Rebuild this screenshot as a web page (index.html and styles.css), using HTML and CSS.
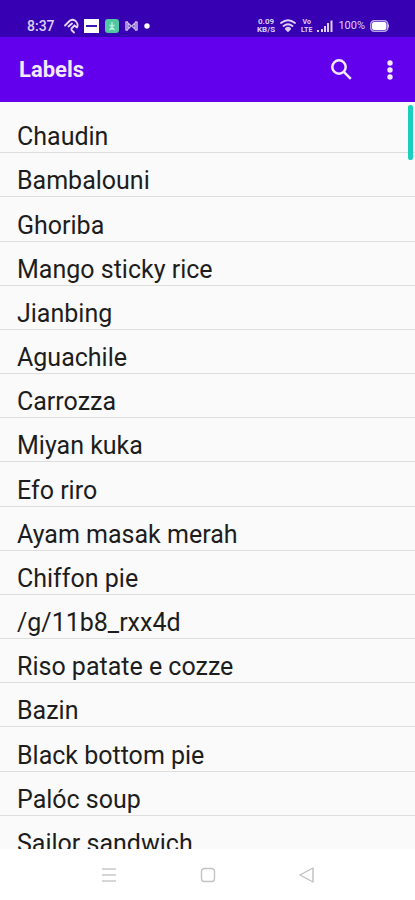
FILE: index.html
```html
<!DOCTYPE html>
<html lang="en">
<head>
<meta charset="utf-8">
<meta name="viewport" content="width=device-width, initial-scale=1">
<title>Labels</title>
<link rel="stylesheet" href="styles.css">
</head>
<body>
<div class="status">
  <div class="status-group">
    <span class="clock">8:37</span>
    <svg width="15" height="16" viewBox="0 0 15 16" fill="none" stroke="#e4d9fa" stroke-width="1.800" stroke-linecap="round" stroke-linejoin="round"><path d="M1 7.500 6 2.500Q10 .5 12.500 4Q14.500 7 13 9.500L10.500 7.500M4.500 8.500 8 5.500M10.500 7.500 7.500 10.500M7.500 12 10 14.500"/></svg>
    <svg width="15" height="16" viewBox="0 0 15 16"><path fill="#fff" d="M0 1h15v14H0z"/><path fill="#3d16b5" d="M2 7h11v2H2z"/></svg>
    <svg class="wide-gap" width="14" height="16" viewBox="0 0 14 16"><rect y="1" width="14" height="14" rx="3" fill="#50c9a3"/><path d="M7 4v8M4.500 7.500h5M7 9l-2.500 3M7 9l2.500 3" fill="none" stroke="#b9f0dc" stroke-width="1.300"/></svg>
    <svg class="wide-gap" width="13" height="16" viewBox="0 0 13 16" fill="none" stroke="#c9b8f0" stroke-width="1.500" stroke-linejoin="round"><path d="M3 4H1v8h2M10 4h2v8h-2M3 5l3 3-3 3zM10 5 7 8l3 3z"/></svg>
    <svg class="wide-gap" width="6" height="16" viewBox="0 0 6 16"><circle cx="3" cy="8" r="2.700" fill="#fff"/></svg>
  </div>
  <div class="status-group">
    <span class="tiny speed"><span>0.09</span><span>KB/S</span></span>
    <svg width="16" height="16" viewBox="0 0 16 16" fill="none" stroke="#ddd0f7" stroke-width="1.800" stroke-linecap="round"><path d="M1 5Q8 -.5 15 5M3.500 8Q8 4.500 12.500 8M6 10.500Q8 9 10 10.500"/><path d="m7 12 1 1 1-1z" fill="#ddd0f7"/></svg>
    <span class="tiny"><span>Vo</span><span>LTE</span></span>
    <svg width="16" height="16" viewBox="0 0 16 16" fill="#ddd0f7"><path d="M0 12h2v2H0zM4 11h2v3H4zM7 8h2v6H7zM10 5h2v9h-2z"/><path d="M13.500 2.500h2V14h-2z"/></svg>
    <span class="percent">100%</span>
    <svg width="20" height="16" viewBox="0 0 20 16"><rect x=".75" y="2.750" width="17" height="10.500" rx="3.500" fill="none" stroke="#b9a4ea" stroke-width="1.500"/><rect x="2" y="4" width="14.500" height="8" rx="2" fill="#fff"/><path d="M18 6q2 2 0 4z" fill="#d7c9f5"/></svg>
  </div>
</div>
<header class="appbar">
  <h1>Labels</h1>
  <button class="icon-button" type="button" aria-label="Search">
    <svg width="24" height="24" viewBox="0 0 24 24" fill="none" stroke="#f3eafe" stroke-width="2.500"><circle cx="9" cy="9" r="6.700"/><path d="m13.800 13.800 7 7"/></svg>
  </button>
  <button class="icon-button" type="button" aria-label="More options">
    <svg width="24" height="24" viewBox="0 0 24 24" fill="#f3eafe"><circle cx="12" cy="5" r="2.700"/><circle cx="12" cy="12" r="2.700"/><circle cx="12" cy="19" r="2.700"/></svg>
  </button>
</header>
<main class="content">
  <ul class="labels">
    <li>Chaudin</li>
    <li>Bambalouni</li>
    <li>Ghoriba</li>
    <li>Mango sticky rice</li>
    <li>Jianbing</li>
    <li>Aguachile</li>
    <li>Carrozza</li>
    <li>Miyan kuka</li>
    <li>Efo riro</li>
    <li>Ayam masak merah</li>
    <li>Chiffon pie</li>
    <li>/g/11b8_rxx4d</li>
    <li>Riso patate e cozze</li>
    <li>Bazin</li>
    <li>Black bottom pie</li>
    <li>Palóc soup</li>
    <li>Sailor sandwich</li>
  </ul>
  <div class="thumb"></div>
</main>
<nav class="navbar" aria-label="System">
  <button type="button" aria-label="Recent apps"><svg width="16" height="16" viewBox="0 0 16 16" stroke="#c9c9c9" stroke-width="1.400"><path d="M1 2h14M1 8h14M1 14h14"/></svg></button>
  <button type="button" aria-label="Home"><svg width="16" height="16" viewBox="0 0 16 16" fill="none" stroke="#c4c4c4" stroke-width="1.400"><rect x="1.500" y="1.500" width="13" height="13" rx="3"/></svg></button>
  <button type="button" aria-label="Back"><svg width="16" height="16" viewBox="0 0 16 16" fill="none" stroke="#c0c0c0" stroke-width="1.400" stroke-linejoin="round"><path d="M14 1v14L1 8z"/></svg></button>
</nav>
</body>
</html>
```
FILE: styles.css
```css
* {
  box-sizing: border-box;
}

body {
  margin: 0;
  height: 100vh;
  display: flex;
  flex-direction: column;
  background: #fff;
  color: #1d1d1d;
  font-family: Roboto, "Liberation Sans", sans-serif;
}

svg {
  display: block;
  flex: none;
}

button {
  display: grid;
  place-items: center;
  padding: 0;
  border: 0;
  background: none;
}

.status {
  flex: none;
  display: flex;
  justify-content: space-between;
  padding: 18px 25px 3px 27px;
  background: #3700b3;
  color: #ddd0f7;
}

.status-group {
  display: flex;
  align-items: center;
  gap: 5px;
  height: 16px;
}

.clock {
  margin-right: 4px;
  font-size: 14px;
  font-weight: 500;
  line-height: 16px;
}

.wide-gap {
  margin-left: 1px;
}

.tiny {
  display: flex;
  flex-direction: column;
  align-items: center;
  font-size: 7px;
  font-weight: 700;
  line-height: 8px;
}

.speed {
  font-size: 8px;
}

.percent {
  font-size: 11px;
  line-height: 16px;
}

.appbar {
  flex: none;
  display: flex;
  align-items: center;
  height: 65px;
  padding: 0 1px 0 19px;
  background: #6200ee;
}

h1 {
  flex: 1;
  margin: 0;
  color: #f3eafe;
  font-size: 22px;
  font-weight: 700;
  line-height: 30px;
}

.icon-button {
  width: 48px;
  height: 48px;
}

.content {
  flex: 1;
  min-height: 0;
  position: relative;
  display: flex;
  flex-direction: column;
  overflow: hidden;
  background: #fafafa;
}

.labels {
  flex: 1;
  display: grid;
  grid-auto-rows: minmax(44px, 1fr);
  margin: 0 0 -11px;
  padding: 7px 0 0;
  list-style: none;
}

.labels li {
  display: flex;
  align-items: flex-end;
  padding: 0 17px;
  border-bottom: 1px solid #dedede;
  font-size: 25px;
  line-height: 30px;
}

.thumb {
  position: absolute;
  top: 3px;
  right: 2px;
  width: 5px;
  height: 55px;
  border-radius: 2px;
  background: #1bcfbd;
}

.navbar {
  flex: none;
  display: flex;
  justify-content: center;
  gap: 51px;
  height: 51px;
}

.navbar button {
  width: 48px;
}
```
